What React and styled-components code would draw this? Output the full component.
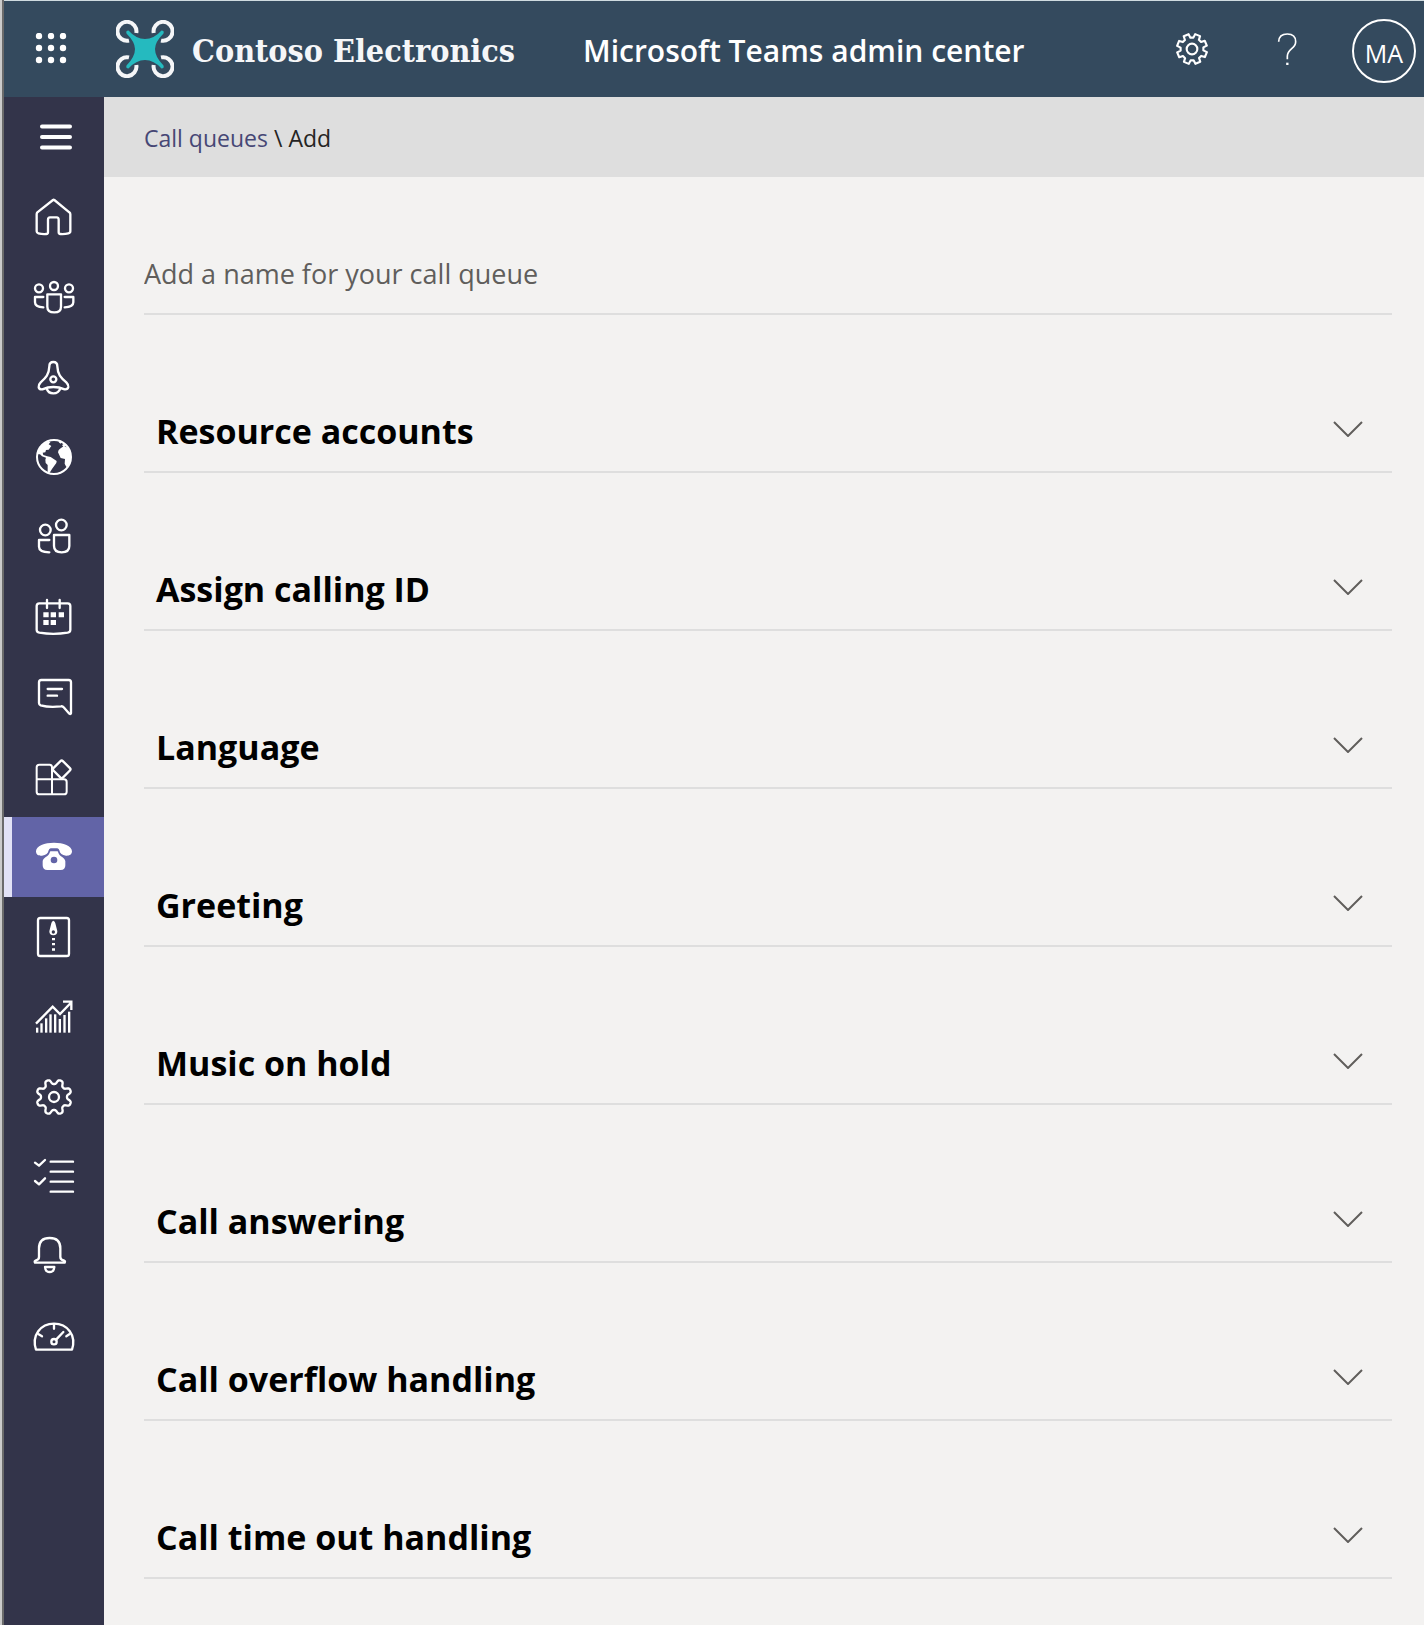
import React, { useState } from "react";
import styled, { createGlobalStyle } from "styled-components";

const GlobalStyle = createGlobalStyle`
  *, *::before, *::after { box-sizing: border-box; }
  body {
    margin: 0;
    background: #f3f2f1;
    font-family: "Segoe UI", "Open Sans", "Noto Sans", sans-serif;
    color: #000;
  }
  button, input { font: inherit; }
`;

const Frame = styled.div`
  min-height: 100vh;
  display: flex;
  border-left: 2px solid #cbcbcb;
`;

const Shell = styled.div`
  flex: 1;
  min-width: 0;
  display: flex;
  flex-direction: column;
  border-left: 2px solid #6b6b6b;
`;

const Header = styled.header`
  display: flex;
  align-items: center;
  height: 97px;
  border-top: 1px solid #cfdbe0;
  background: #344a5e;
  color: #fff;
`;

const HeaderButton = styled.button`
  display: flex;
  align-items: center;
  justify-content: center;
  width: 96px;
  height: 96px;
  padding: 0;
  border: 0;
  background: transparent;
  color: #fff;
  cursor: pointer;
`;

const LauncherButton = styled(HeaderButton)`
  padding-right: 2px;
`;

const Brand = styled.a`
  display: flex;
  align-items: center;
  gap: 18px;
  margin-left: 16px;
  color: #f5f6f8;
  text-decoration: none;
`;

const BrandName = styled.span`
  padding-top: 4px;
  font-family: "DejaVu Serif Condensed", "DejaVu Serif", serif;
  font-size: 32px;
  line-height: 40px;
  font-weight: 700;
  white-space: nowrap;
`;

const AppTitle = styled.h1`
  flex: 1;
  margin: 0 0 0 68px;
  padding-top: 4px;
  font-size: 30px;
  line-height: 40px;
  font-weight: 600;
  white-space: nowrap;
`;

const Avatar = styled.button`
  width: 64px;
  height: 64px;
  margin: 4px 8px 0 16px;
  padding: 4px 0 0;
  border: 2px solid #fff;
  border-radius: 50%;
  background: transparent;
  color: #fff;
  font-size: 25px;
  line-height: 32px;
  cursor: pointer;
`;

const Body = styled.div`
  flex: 1;
  display: flex;
`;

const Sidebar = styled.nav`
  flex: 0 0 100px;
  display: flex;
  flex-direction: column;
  background: #33344a;
`;

const MenuButton = styled.button`
  display: flex;
  align-items: center;
  justify-content: center;
  height: 80px;
  padding: 0 0 0 4px;
  border: 0;
  background: transparent;
  color: #fff;
  cursor: pointer;
`;

const NavLink = styled.a`
  display: flex;
  align-items: center;
  justify-content: center;
  height: 80px;
  color: #fff;
  background: ${(p) => (p.$active ? "#6264a7" : "transparent")};
  box-shadow: ${(p) => (p.$active ? "inset 8px 0 0 #e2e2f6" : "none")};
`;

const NavIcon = styled.svg`
  width: 40px;
  height: 40px;
  overflow: visible;
  fill: none;
  stroke: currentColor;
  stroke-width: 7;
  stroke-linejoin: round;
  stroke-linecap: round;

  .solid { fill: currentColor; stroke: none; }
  .thin { stroke-width: 6; }
  .sharp { stroke-linecap: butt; stroke-linejoin: miter; }
  .cut { fill: #33344a; stroke: none; }
  .cutActive { fill: #6264a7; stroke: none; }
`;

const Content = styled.div`
  flex: 1;
  min-width: 0;
`;

const Breadcrumb = styled.nav`
  display: flex;
  align-items: center;
  gap: 6px;
  height: 80px;
  padding: 2px 40px 0;
  background: #dedede;
  color: #252423;
  font-size: 23px;
  line-height: 32px;
`;

const CrumbLink = styled.a`
  color: #464775;
  text-decoration: none;
`;

const Main = styled.main`
  padding: 58px 32px 40px 40px;
`;

const NameInput = styled.input`
  display: block;
  width: 100%;
  height: 80px;
  padding: 0 0 2px;
  border: 0;
  border-bottom: 2px solid #dedede;
  border-radius: 0;
  outline: 0;
  background: transparent;
  color: #252423;
  font-size: 27px;
  line-height: 40px;

  &::placeholder { color: #605e5c; opacity: 1; }
`;

const Section = styled.h2`
  margin: 0;
  padding-top: 76px;
  border-bottom: 2px solid #dedede;
`;

const SectionToggle = styled.button`
  display: flex;
  align-items: center;
  justify-content: space-between;
  width: 100%;
  height: 80px;
  padding: 0 28px 0 12px;
  border: 0;
  background: transparent;
  color: #000;
  font-size: 34px;
  line-height: 48px;
  font-weight: 700;
  text-align: left;
  cursor: pointer;
`;

const Chevron = styled.svg`
  width: 32px;
  height: 16px;
  margin-bottom: 4px;
  fill: none;
  stroke: #605e5c;
  stroke-width: 2;
  transform: ${(p) => (p.$open ? "rotate(180deg)" : "none")};
`;

/* Builds a closed outline from polar points around (60, 60). */
function polarPath(points) {
  return (
    points
      .map(([deg, r], i) => {
        const a = (deg * Math.PI) / 180;
        const x = (60 + r * Math.sin(a)).toFixed(1);
        const y = (60 - r * Math.cos(a)).toFixed(1);
        return `${i ? "L" : "M"}${x} ${y}`;
      })
      .join("") + "Z"
  );
}

const softGear = polarPath(
  Array.from({ length: 144 }, (_, i) => {
    const deg = i * 2.5;
    const wave = -Math.cos((deg * 8 * Math.PI) / 180);
    return [deg, 46 + (7 * Math.tanh(1.8 * wave)) / Math.tanh(1.8)];
  })
);

const squareGear = polarPath(
  Array.from({ length: 8 }, (_, i) => i * 45 + 22).flatMap((d) => [
    [d - 15, 43],
    [d - 10, 57],
    [d + 10, 57],
    [d + 15, 43],
  ])
);

const bars = [
  [9, 92], [22, 79], [36, 64], [49, 52], [63, 52], [77, 66], [91, 54], [105, 44],
];

const navItems = [
  {
    label: "Dashboard",
    art: (
      <path d="M57 9 L10 46 Q8 48 8 52 V103 Q8 108 13 109 Q24 112 37 111 Q42 111 42 106 V68 Q42 61 48 61 H68 Q74 61 74 68 V106 Q74 111 79 111 Q92 112 103 109 Q109 108 109 103 V52 Q109 48 106 46 L61 9 Q59 7 57 9Z" />
    ),
  },
  {
    label: "Teams",
    art: (
      <>
        <circle cx="15" cy="34" r="12" />
        <circle cx="60" cy="27" r="12" />
        <circle cx="105" cy="34" r="12" />
        <path d="M40 52 H81 V89 Q81 106 61 106 Q40 106 40 89Z" />
        <path d="M28 60 H3 V76 Q3 90 28 91" />
        <path d="M92 60 H118 V76 Q118 90 92 91" />
      </>
    ),
  },
  {
    label: "Teams devices",
    art: (
      <>
        <path d="M46 28 Q46 15 58 15 Q70 15 70 28 C71 52 80 62 97 76 Q104 83 103 90 Q101 98 92 97 Q58 83 25 97 Q15 98 14 90 Q13 83 20 76 C36 62 45 52 46 28Z" />
        <path d="M38 94 Q42 109 58 109 Q74 109 79 94" />
        <circle cx="58" cy="67" r="9" />
      </>
    ),
  },
  {
    label: "Locations",
    art: (
      <>
        <circle cx="60" cy="60" r="51" className="thin" />
        <path
          className="solid"
          d="M10 52 Q14 28 34 16 L50 14 L44 22 L52 27 L44 38 L36 39 L34 46 L26 47 L28 54 L40 58 L50 60 L68 72 Q69 80 61 86 L54 96 L47 107 L41 106 V84 L35 78 L34 68 L36 62 L24 58 L18 52Z"
        />
        <path
          className="solid"
          d="M72 46 Q72 38 80 34 L90 27 L102 32 L111 52 V68 L104 86 L97 90 L92 80 L93 66 L80 63Z M74 16 L84 13 L80 20Z M84 24 L93 19 L98 26 L88 29Z"
        />
      </>
    ),
  },
  {
    label: "Users",
    art: (
      <>
        <circle cx="34" cy="39" r="16" />
        <circle cx="82" cy="24" r="16" />
        <path d="M60 54 H106 V87 Q106 106 83 106 Q60 106 60 87Z" />
        <path d="M46 69 H15 V89 Q15 105 46 106" />
      </>
    ),
  },
  {
    label: "Meetings",
    art: (
      <>
        <path d="M16 19 H101 Q109 19 109 27 V98 Q109 105 101 107 Q58 114 16 107 Q8 105 8 98 V27 Q8 19 16 19Z" />
        <path d="M39 9 V33 M77 9 V33" />
        <path
          className="solid"
          d="M28 46h16v15h-16z M50 46h16v15h-16z M74 46h16v15h-16z M28 69h16v15h-16z M50 69h16v15h-16z"
        />
      </>
    ),
  },
  {
    label: "Messaging policies",
    art: (
      <>
        <path d="M22 9 H104 Q111 9 111 16 V108 Q110 113 106 110 L89 91 Q86 87 81 88 Q45 92 20 85 Q15 83 15 78 V16 Q15 9 22 9Z" />
        <path d="M41 36 H84 M41 56 H69" />
      </>
    ),
  },
  {
    label: "Teams apps",
    art: (
      <>
        <path
          className="thin"
          d="M8 67 H90 Q98 67 98 75 V104 Q98 112 90 112 H16 Q8 112 8 104 V31 Q8 23 16 23 H47 Q54 23 54 31 V112"
        />
        <rect x="63" y="17" width="40" height="40" rx="5" transform="rotate(45 83 37)" />
      </>
    ),
  },
  {
    label: "Voice",
    active: true,
    art: (
      <>
        <path
          className="solid"
          d="M60 17 C88 17 114 27 114 43 C114 54 104 57 96 56 C84 55 78 50 76 40 Q75 35 70 34 H50 Q45 35 44 40 C42 50 36 55 24 56 C14 57 6 54 6 43 C6 27 32 17 60 17Z"
        />
        <path
          className="solid"
          d="M50 43 H70 Q72 43 73 47 C76 58 94 62 94 73 V85 Q94 99 80 99 H40 Q26 99 26 85 V73 C26 62 44 58 47 47 Q48 43 50 43Z"
        />
        <circle className="cutActive" cx="60" cy="69" r="10" />
      </>
    ),
  },
  {
    label: "Policy packages",
    art: (
      <>
        <rect x="12" y="3" width="93" height="114" rx="7" />
        <path
          className="solid"
          d="M58 11 Q63 13 64 19 L70 43 A12 12 0 1 1 46 43 L52 19 Q53 13 58 11Z M54 63h9v7h-9z M54 78h9v7h-9z M54 94h9v7h-9z"
        />
        <circle className="cut" cx="58" cy="45" r="5" />
      </>
    ),
  },
  {
    label: "Analytics & reports",
    art: (
      <>
        <path className="sharp" d="M6 80 L56 29 L78 51 L110 18 M87 14 H112 V39" />
        {bars.map(([x, top]) => (
          <rect key={x} className="solid" x={x - 3} y={top} width="7" height={107 - top} />
        ))}
      </>
    ),
  },
  {
    label: "Org-wide settings",
    art: (
      <>
        <path d={softGear} />
        <circle cx="60" cy="60" r="15" />
      </>
    ),
  },
  {
    label: "Planning",
    art: (
      <>
        <path d="M50 14 H117 M50 44 H117 M50 74 H117 M50 104 H117" />
        <path d="M3 17 L15 26 L33 9 M3 72 L15 82 L33 64" />
      </>
    ),
  },
  {
    label: "Notifications & alerts",
    art: (
      <>
        <path d="M15 34 Q15 3 47 3 Q79 3 79 34 V60 Q79 68 89 70 Q95 72 92 77 H3 Q0 72 6 70 Q15 68 15 60Z" />
        <path d="M33 90 H61 Q60 105 47 105 Q34 105 33 90Z" />
      </>
    ),
  },
  {
    label: "Call quality dashboard",
    art: (
      <>
        <path d="M6 98 C-8 55 20 20 60 20 C100 20 128 55 114 98Z" />
        <path d="M60 22 V35 M14 52 L24 58 M106 52 L97 58 M67 67 L88 45" />
        <circle cx="60" cy="74" r="8" />
      </>
    ),
  },
];

const sections = [
  "Resource accounts",
  "Assign calling ID",
  "Language",
  "Greeting",
  "Music on hold",
  "Call answering",
  "Call overflow handling",
  "Call time out handling",
];

function WaffleIcon() {
  return (
    <svg width="32" height="32" viewBox="0 0 32 32" fill="#fff" aria-hidden="true">
      {[3, 15, 27].map((y) =>
        [4, 16, 28].map((x) => <circle key={`${x}-${y}`} cx={x} cy={y} r="3.2" />)
      )}
    </svg>
  );
}

function DroneLogo() {
  return (
    <svg width="58" height="58" viewBox="0 0 58 58" fill="none" aria-hidden="true">
      <g stroke="#f5f6f8" strokeWidth="4">
        <path d="M20.3 13 A9.5 9.5 0 1 0 13 20.6" />
        <path d="M37.7 13 A9.5 9.5 0 1 1 45 20.6" />
        <path d="M20.3 45 A9.5 9.5 0 1 1 13 37.4" />
        <path d="M37.7 45 A9.5 9.5 0 1 0 45 37.4" />
      </g>
      <path
        fill="#25babf"
        d="M12.5 10.500 Q20 19 29 19 Q38 19 45.500 10.500 Q48.500 10.500 47.500 13.500 Q39 22 39 29 Q39 37 47.500 45.500 Q48.500 48.500 45.500 48.500 Q38 40 29 40 Q20 40 12.500 48.500 Q9.500 48.500 10.500 45.500 Q19 37 19 29 Q19 22 10.500 13.500 Q9.500 10.500 12.500 10.500Z"
      />
    </svg>
  );
}

function CallQueueSection({ title }) {
  const [open, setOpen] = useState(false);
  return (
    <Section>
      <SectionToggle type="button" aria-expanded={open} onClick={() => setOpen(!open)}>
        {title}
        <Chevron viewBox="0 0 32 16" $open={open} aria-hidden="true">
          <path d="M2 1 L16 15 L30 1" />
        </Chevron>
      </SectionToggle>
    </Section>
  );
}

export default function App() {
  return (
    <Frame>
      <GlobalStyle />
      <Shell>
        <Header>
          <LauncherButton type="button" aria-label="App launcher">
            <WaffleIcon />
          </LauncherButton>
          <Brand href="#home">
            <DroneLogo />
            <BrandName>Contoso Electronics</BrandName>
          </Brand>
          <AppTitle>Microsoft Teams admin center</AppTitle>
          <HeaderButton type="button" aria-label="Settings">
            <svg width="32" height="32" viewBox="0 0 120 120" fill="none" stroke="#fff" strokeWidth="8" strokeLinejoin="round" aria-hidden="true">
              <path d={squareGear} />
              <circle cx="60" cy="60" r="20" />
            </svg>
          </HeaderButton>
          <HeaderButton type="button" aria-label="Help">
            <svg width="32" height="32" viewBox="0 0 96 96" fill="none" stroke="#fff" strokeWidth="5" aria-hidden="true">
              <path d="M20 26 Q21 3 46 3 Q71 3 71 26 Q71 37 59 47 Q46 58 46 70 V79" />
              <path d="M46 89 V96" strokeWidth="7" />
            </svg>
          </HeaderButton>
          <Avatar type="button" aria-label="Account MA">MA</Avatar>
        </Header>
        <Body>
          <Sidebar aria-label="Admin center">
            <MenuButton type="button" aria-label="Toggle navigation">
              <svg width="32" height="26" viewBox="0 0 32 26" stroke="#fff" strokeWidth="4" strokeLinecap="round" aria-hidden="true">
                <path d="M2 2.500 H30 M2 13 H30 M2 23.500 H30" />
              </svg>
            </MenuButton>
            {navItems.map((item) => (
              <NavLink
                key={item.label}
                href="#section"
                aria-label={item.label}
                aria-current={item.active ? "page" : undefined}
                $active={item.active}
              >
                <NavIcon viewBox="0 0 120 120" aria-hidden="true">
                  {item.art}
                </NavIcon>
              </NavLink>
            ))}
          </Sidebar>
          <Content>
            <Breadcrumb aria-label="Breadcrumb">
              <CrumbLink href="#call-queues">Call queues</CrumbLink>
              <span>\</span>
              <span>Add</span>
            </Breadcrumb>
            <Main>
              <NameInput
                type="text"
                aria-label="Call queue name"
                placeholder="Add a name for your call queue"
              />
              {sections.map((title) => (
                <CallQueueSection key={title} title={title} />
              ))}
            </Main>
          </Content>
        </Body>
      </Shell>
    </Frame>
  );
}
